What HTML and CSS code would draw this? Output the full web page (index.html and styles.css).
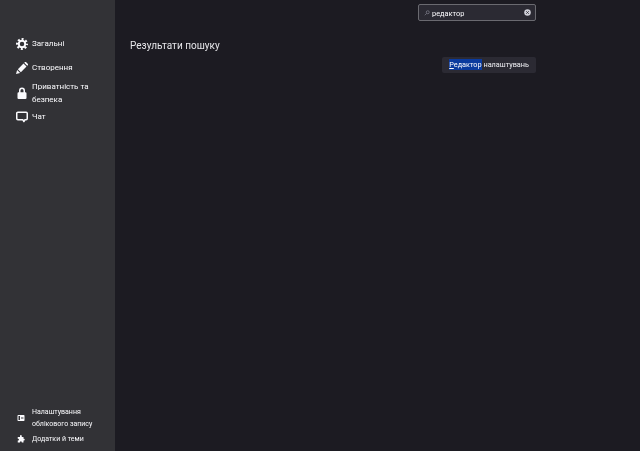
FILE: index.html
```html
<!DOCTYPE html>
<html lang="uk">
<head>
<meta charset="utf-8">
<title>Налаштування</title>
<link rel="stylesheet" href="styles.css">
</head>
<body>
<div class="m-side">
	<ul class="cats">
		<li class="cat cat-first">
			<svg class="ico" viewBox="0 0 16 16"><circle cx="8" cy="8" r="4.300" fill="none" stroke="#fbfbfe" stroke-width="2.600"/><circle cx="8" cy="8" r="6.500" fill="none" stroke="#fbfbfe" stroke-width="3" stroke-dasharray="2.600 2.505" stroke-dashoffset="1.300"/></svg>
			<span class="txt">Загальні</span>
		</li>
		<li class="cat cat-edit">
			<svg class="ico" viewBox="0 0 16 16"><path fill="#fbfbfe" d="M0 16l1.500-5.500L5.500 14.500zM2.500 9.500L10 2l4 4-7.500 7.500zM11 1l.6-.6a1.400 1.400 0 012 0l2 2a1.400 1.400 0 010 2L15 5z"/></svg>
			<span class="txt">Створення</span>
		</li>
		<li class="cat cat-lock">
			<svg class="ico" viewBox="0 0 16 16"><path fill="#fbfbfe" fill-rule="evenodd" d="M4 7V4.800a4 4 0 018 0V7h.5A1.500 1.500 0 0114 8.500v6a1.500 1.500 0 01-1.500 1.500h-9A1.500 1.500 0 012 14.500v-6A1.500 1.500 0 013.500 7zm2 0h4V4.800a2 2 0 00-4 0z"/></svg>
			<span class="txt">Приватність та безпека</span>
		</li>
		<li class="cat cat-chat">
			<svg class="ico" viewBox="0 0 16 16"><path fill="none" stroke="#fbfbfe" stroke-width="2" stroke-linejoin="round" d="M2.500 1.500h11A1.500 1.500 0 0115 3v7a1.500 1.500 0 01-1.500 1.500H12l-1.500 2.500L9 11.500H2.500A1.500 1.500 0 011 10V3a1.500 1.500 0 011.500-1.500z"/></svg>
			<span class="txt">Чат</span>
		</li>
	</ul>
	<ul class="foot">
		<li class="cat">
			<svg class="ico-s" viewBox="0 0 16 16"><path fill="#fbfbfe" fill-rule="evenodd" d="M2.500 2h11A1.500 1.500 0 0115 3.500v9a1.500 1.500 0 01-1.500 1.500h-11A1.500 1.500 0 011 12.500v-9A1.500 1.500 0 012.500 2zM3 4v8h3V4zm5 2v1.200h5V6zm0 3v1.200h5V9z"/></svg>
			<span class="txt">Налаштування облікового запису</span>
		</li>
		<li class="cat cat-addon">
			<svg class="ico-s" viewBox="0 0 16 16"><path fill="#fbfbfe" d="M6 1.500a1.800 1.800 0 013.500 0V4h3.500v3.500h1a1.800 1.800 0 010 3.500h-1V15H9.500v-1a1.800 1.800 0 00-3.500 0v1H1.500v-4h1a1.800 1.800 0 000-3.500h-1V4H6z"/></svg>
			<span class="txt">Додатки й теми</span>
		</li>
	</ul>
</div>
<div class="m-main">
	<div class="search">
		<svg class="search-ico" viewBox="0 0 16 16"><circle cx="10" cy="6" r="4" fill="none" stroke="#8f8f9d" stroke-width="1.600"/><path stroke="#8f8f9d" stroke-width="1.600" d="M7 9l-5 5"/></svg>
		<span class="search-txt txt">редактор</span>
		<svg class="search-clear" viewBox="0 0 16 16"><circle cx="8" cy="8" r="7.500" fill="#cfcfd8"/><path stroke="#2b2a33" stroke-width="1.800" d="M5 5l6 6M11 5l-6 6"/></svg>
	</div>
	<h1 class="title txt">Результати пошуку</h1>
	<div class="hit-wrap">
		<div class="hit"><span class="hit-txt txt"><span class="mark"><u>Р</u>едактор</span> налаштувань</span></div>
	</div>
</div>
</body>
</html>
```

FILE: styles.css
```css
*{margin:0;padding:0;box-sizing:border-box;}
html,body{height:100%;}
body{display:flex;height:451px;overflow:hidden;background:#1c1b22;color:#fbfbfe;font-family:Roboto,"Noto Sans",sans-serif;font-size:8px;}
ul{list-style:none;}
.txt{will-change:opacity;}

/** 左侧菜单 **/
.m-side{display:flex;flex-direction:column;justify-content:space-between;width:115px;flex:none;background:#323236;padding:36px 0 6px 16px;}
.cat{display:flex;align-items:center;gap:4px;line-height:13px;}
.cat .txt{display:block;width:76px;}
.cat-first{height:15px;}
.cat-edit{margin-top:10px;}
.cat-lock{margin-top:6px;}
.cat-chat{margin-top:4px;}
.ico{width:12px;height:12px;flex:none;}
.foot{padding-left:1px;}
.foot .cat{gap:7px;}
.foot .cat .txt{width:72px;line-height:12px;font-size:7px;}
.foot .cat-addon{margin-top:3px;}
.ico-s{width:8px;height:8px;flex:none;}

/** 右侧内容 **/
.m-main{flex:1;padding:4px 104px 0 15px;display:flex;flex-direction:column;}
.search{align-self:flex-end;display:flex;align-items:center;width:118px;height:17px;padding:0 4px 0 5px;background:#2b2a33;border:1px solid #6a6a70;border-radius:2px;font-size:7.4px;}
.search-ico{width:6px;height:6px;flex:none;margin-right:2px;}
.search-txt{flex:1;padding-top:1px;}
.search-clear{width:7px;height:7px;flex:none;}
.title{margin-top:18px;font-size:10px;font-weight:400;line-height:14px;color:#e6e6ea;}
.hit-wrap{display:flex;justify-content:flex-end;margin-top:4px;}
.hit{height:16px;padding:0 7px;background:#2b2a33;border-radius:2px;line-height:16px;font-size:7.300px;color:#f0f0f4;}
.hit-txt{display:block;}
.mark{display:inline-block;line-height:11px;background:#0a3a9e;color:#fbfbfe;}
```
